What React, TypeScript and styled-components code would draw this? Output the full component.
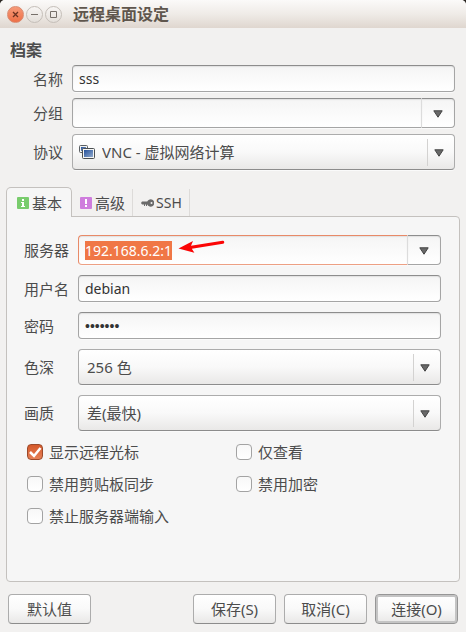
import React, { useEffect, useRef, useState } from "react";
import styled, { createGlobalStyle, css } from "styled-components";

const GlobalStyle = createGlobalStyle`
  * { box-sizing: border-box; }
  body { margin: 0; background: #2b2723; }
  body, input, button, select {
    font-family: "Noto Sans", "Noto Sans CJK SC", sans-serif;
    font-size: 15px;
    line-height: 20px;
    color: #4c4c4c;
  }
`;

const Window = styled.main`
  display: flex;
  flex-direction: column;
  min-height: 100vh;
  background: #f2f1f0;
  border-radius: 5px 5px 0 0;
`;

const TitleBar = styled.header`
  display: flex;
  align-items: center;
  gap: 2px;
  height: 28px;
  padding-left: 7px;
  border-radius: 5px 5px 0 0;
  background: linear-gradient(#fbfaf9, #efebe7 50%, #dfd6cf);
`;

const WindowButton = styled.button<{ $close?: boolean }>`
  display: grid;
  width: 17px;
  height: 17px;
  padding: 0;
  place-items: center;
  border: 1px solid ${(p) => (p.$close ? "#d98a70" : "#c4beb8")};
  border-radius: 50%;
  background: ${(p) => (p.$close ? "linear-gradient(#f79a78, #ee6f46)" : "linear-gradient(#f8f6f4, #e4dfda)")};
  color: ${(p) => (p.$close ? "#6b3120" : "#76706a")};

  svg { display: block; }
`;

const Title = styled.h1`
  margin: 0 0 0 9px;
  font-size: 16px;
  line-height: 24px;
  font-weight: 700;
  color: #5f564d;
`;

const Profile = styled.section`
  padding: 12px 11px 0 10px;
`;

const Heading = styled.h2`
  margin: 0 0 5px;
  font-size: 16px;
  line-height: 20px;
  font-weight: 700;
`;

const Rows = styled.div<{ $labelWidth: number; $gap: number }>`
  display: grid;
  grid-template-columns: ${(p) => p.$labelWidth}px 1fr;
  row-gap: ${(p) => p.$gap}px;
  align-items: center;
`;

const Label = styled.label<{ $end?: boolean }>`
  padding-right: 9px;
  text-align: ${(p) => (p.$end ? "right" : "left")};
`;

const sunken = css`
  border: 1px solid #a5a5a5;
  border-top-color: #8d8d8d;
  border-radius: 4px;
  background: linear-gradient(#f5f5f5, #ffffff);
  box-shadow: inset 0 1px 1px #e2e2e2, 0 1px 0 #fafafa;
`;

const Entry = styled.input`
  ${sunken}
  width: 100%;
  height: 27px;
  padding: 0 6px;
  font-size: 14px;
  color: #333333;
  outline: none;

  &[type="password"] { font-family: "Liberation Sans", sans-serif; }
`;

const Combo = styled.div`
  display: flex;
  height: 30px;
`;

const ComboEntry = styled(Entry)<{ $active?: boolean }>`
  flex: 1;
  min-width: 0;
  height: 30px;
  border-right-color: #dcdcdc;
  border-radius: 4px 0 0 4px;
  ${(p) => p.$active && "border-color: #e88a68 #dcdcdc #eda084 #e88a68;"}

  &::selection { background: #f07746; color: #ffffff; }
`;

const ComboButton = styled.button`
  ${sunken}
  display: grid;
  width: 33px;
  padding: 2px 0 0;
  place-items: center;
  border-left: 0;
  border-radius: 0 4px 4px 0;
`;

const raised = css`
  border: 1px solid #acacac;
  border-bottom-color: #8c8c8c;
  border-radius: 4px;
  background: linear-gradient(#ffffff, #f9f9f9 50%, #e9e8e7);
`;

const Picker = styled.div<{ $icon: boolean }>`
  ${raised}
  display: flex;
  align-items: center;
  gap: 7px;
  height: 36px;
  padding-left: ${(p) => (p.$icon ? 6 : 8)}px;
  box-shadow: 0 1px 0 #fafafa;

  > svg { flex: none; }
`;

const PickerSelect = styled.select`
  flex: 1;
  min-width: 0;
  height: 34px;
  padding: 0;
  border: 0;
  outline: none;
  appearance: none;
  background: transparent;
`;

const PickerArrow = styled.span`
  display: grid;
  width: 27px;
  height: 27px;
  padding: 1px 5px 0 0;
  place-items: center;
  border-left: 1px solid #d3d2d1;
  pointer-events: none;
`;

const Tabs = styled.div`
  display: flex;
  align-items: flex-end;
  margin: 17px 0 -1px 6px;
`;

const Tab = styled.button<{ $active?: boolean; $latin?: boolean }>`
  display: flex;
  align-items: center;
  gap: 2px;
  height: 28px;
  padding: 0 7px 0 8px;
  border: 0;
  border-right: 1px solid #dddbd9;
  background: transparent;
  font-size: ${(p) => (p.$latin ? 14 : 15)}px;
  ${(p) =>
    p.$active &&
    css`
      height: 30px;
      padding: 0 9px 0 10px;
      border: 1px solid #c4c1be;
      border-bottom: 0;
      border-radius: 5px 5px 0 0;
      background: #f6f6f6;
      z-index: 1;
    `}
`;

const Panel = styled.section`
  flex: 1;
  margin: 0 6px;
  padding: 18px 18px 20px 17px;
  border: 1px solid #c4c1be;
  border-radius: 0 4px 4px 4px;
  background: #f6f6f6;
`;

const ServerLine = styled.div`
  position: relative;
`;

const Pointer = styled.svg`
  position: absolute;
  left: 98px;
  top: 2px;
  pointer-events: none;
`;

const Checks = styled.div`
  display: grid;
  grid-template-columns: 209px 1fr;
  row-gap: 12px;
  margin: 11px 0 0 3px;
`;

const CheckLabel = styled.label`
  display: flex;
  align-items: center;
  gap: 6px;
`;

const CheckBox = styled.input`
  width: 16px;
  height: 16px;
  margin: 0;
  appearance: none;
  border: 1px solid #a3a3a3;
  border-radius: 4px;
  background: linear-gradient(#f8f8f8, #ffffff);
`;

const CheckMark = styled.span`
  display: grid;

  > * { grid-area: 1 / 1; }
  > svg { visibility: hidden; pointer-events: none; }
  > input:checked { border-color: #9c4a2b; background: linear-gradient(#d5592b, #e68157); }
  > input:checked + svg { visibility: visible; }
`;

const Footer = styled.footer`
  display: flex;
  gap: 8px;
  padding: 12px 8px 8px;
`;

const ActionButton = styled.button<{ $first?: boolean; $primary?: boolean }>`
  ${raised}
  width: 83px;
  height: 30px;
  padding: 0;
  white-space: nowrap;
  margin-right: ${(p) => (p.$first ? "auto" : "0")};
  ${(p) => p.$primary && "border-color: #969696; box-shadow: inset 0 0 0 2px #c4c4c4;"}
`;

const Down = () => (
  <svg width="10" height="8" viewBox="0 0 10 8" aria-hidden="true">
    <path d="M.8.8h8.4L5 7.2z" fill="#686868" stroke="#434343" />
  </svg>
);

const ScreensIcon = () => (
  <svg width="16" height="14" viewBox="0 0 16 14" aria-hidden="true">
    <defs>
      <linearGradient id="screen" x1="0" y1="0" x2="1" y2="1">
        <stop offset="0" stopColor="#24509a" />
        <stop offset="1" stopColor="#8fa9cd" />
      </linearGradient>
    </defs>
    <rect x=".5" y=".5" width="8" height="7" rx="1" fill="#f2f2f0" stroke="#5a5f62" />
    <path d="M2 2h5v4H2z" fill="url(#screen)" />
    <rect x="3.5" y="3.5" width="12" height="10" rx="1" fill="#f6f6f4" stroke="#4a4f52" />
    <path d="M5 5h9v7H5z" fill="url(#screen)" />
  </svg>
);

const InfoIcon = () => (
  <svg width="13" height="12" viewBox="0 0 13 12" aria-hidden="true">
    <rect width="12" height="12" rx="1" fill="#79cc6d" />
    <path d="M5 2h2v2H5zM4 5h3v4h1v1H4V9h1V6H4z" fill="#fff" />
  </svg>
);

const AlertIcon = () => (
  <svg width="13" height="12" viewBox="0 0 13 12" aria-hidden="true">
    <rect width="12" height="12" rx="1" fill="#cf7ddd" />
    <path d="M5 2h2v5H5zM5 8h2v2H5z" fill="#fff" />
  </svg>
);

const KeyIcon = () => (
  <svg width="13" height="10" viewBox="0 0 13 10" aria-hidden="true">
    <path d="M1 3.500h5.200a3.700 3.700 0 1 1 0 3H6V8H5V6.500H4V8H3V6.500H1L0 5z" fill="#6b6b6b" />
    <circle cx="10.500" cy="5" r="1" fill="#f2f1f0" />
  </svg>
);

interface CheckProps {
  text: string;
  defaultChecked?: boolean;
}

const Check = ({ text, defaultChecked }: CheckProps) => (
  <CheckLabel>
    <CheckMark>
      <CheckBox type="checkbox" defaultChecked={defaultChecked} />
      <svg width="16" height="16" viewBox="0 0 16 16" aria-hidden="true">
        <path d="M3 8l4 4 6.500-8" fill="none" stroke="#fff" strokeWidth="2.500" />
      </svg>
    </CheckMark>
    {text}
  </CheckLabel>
);

interface DropDownProps {
  id: string;
  options: string[];
  icon?: React.ReactNode;
}

const DropDown = ({ id, options, icon }: DropDownProps) => (
  <Picker $icon={Boolean(icon)}>
    {icon}
    <PickerSelect id={id}>
      {options.map((option) => (
        <option key={option}>{option}</option>
      ))}
    </PickerSelect>
    <PickerArrow><Down /></PickerArrow>
  </Picker>
);

const tabs = [
  { name: "基本", icon: <InfoIcon /> },
  { name: "高级", icon: <AlertIcon /> },
  { name: "SSH", icon: <KeyIcon />, latin: true },
];

export default function App() {
  const server = useRef<HTMLInputElement>(null);
  const [active, setActive] = useState("基本");

  useEffect(() => {
    server.current?.focus();
    server.current?.select();
  }, []);

  return (
    <>
      <GlobalStyle />
      <Window>
        <TitleBar>
          <WindowButton $close aria-label="关闭">
            <svg width="7" height="7" viewBox="0 0 7 7"><path d="M1 1l5 5M6 1L1 6" stroke="currentColor" strokeWidth="1.3" /></svg>
          </WindowButton>
          <WindowButton aria-label="最小化">
            <svg width="7" height="7" viewBox="0 0 7 7"><path d="M0 3.5h7" stroke="currentColor" /></svg>
          </WindowButton>
          <WindowButton aria-label="最大化">
            <svg width="7" height="7" viewBox="0 0 7 7"><path d="M.5.5h6v6h-6z" fill="none" stroke="currentColor" /></svg>
          </WindowButton>
          <Title>远程桌面设定</Title>
        </TitleBar>

        <Profile>
          <Heading>档案</Heading>
          <Rows $labelWidth={62} $gap={6}>
            <Label $end htmlFor="name">名称</Label>
            <Entry id="name" defaultValue="sss" />
            <Label $end htmlFor="group">分组</Label>
            <Combo>
              <ComboEntry id="group" />
              <ComboButton aria-label="选择分组"><Down /></ComboButton>
            </Combo>
            <Label $end htmlFor="protocol">协议</Label>
            <DropDown id="protocol" options={["VNC - 虚拟网络计算"]} icon={<ScreensIcon />} />
          </Rows>
        </Profile>

        <Tabs role="tablist">
          {tabs.map((tab) => (
            <Tab
              key={tab.name}
              role="tab"
              aria-selected={tab.name === active}
              $active={tab.name === active}
              $latin={tab.latin}
              onClick={() => setActive(tab.name)}
            >
              {tab.icon}
              {tab.name}
            </Tab>
          ))}
        </Tabs>

        <Panel>
          <Rows $labelWidth={54} $gap={10}>
            <Label htmlFor="server">服务器</Label>
            <ServerLine>
              <Combo>
                <ComboEntry id="server" ref={server} $active defaultValue="192.168.6.2:1" />
                <ComboButton aria-label="选择服务器"><Down /></ComboButton>
              </Combo>
              <Pointer width="50" height="24" viewBox="0 0 50 24" aria-hidden="true">
                <path d="M2.500 11.500L17 4l-2 4.800L46.500 3.800a1.500 1.500 0 0 1 .5 3L15.800 11.800l2.600 4z" fill="#fb0505" />
              </Pointer>
            </ServerLine>
            <Label htmlFor="user">用户名</Label>
            <Entry id="user" defaultValue="debian" />
            <Label htmlFor="password">密码</Label>
            <Entry id="password" type="password" defaultValue="1234567" />
            <Label htmlFor="depth">色深</Label>
            <DropDown id="depth" options={["256 色"]} />
            <Label htmlFor="quality">画质</Label>
            <DropDown id="quality" options={["差(最快)"]} />
          </Rows>
          <Checks>
            <Check text="显示远程光标" defaultChecked />
            <Check text="仅查看" />
            <Check text="禁用剪贴板同步" />
            <Check text="禁用加密" />
            <Check text="禁止服务器端输入" />
          </Checks>
        </Panel>

        <Footer>
          <ActionButton $first>默认值</ActionButton>
          <ActionButton>保存(S)</ActionButton>
          <ActionButton>取消(C)</ActionButton>
          <ActionButton $primary>连接(O)</ActionButton>
        </Footer>
      </Window>
    </>
  );
}
